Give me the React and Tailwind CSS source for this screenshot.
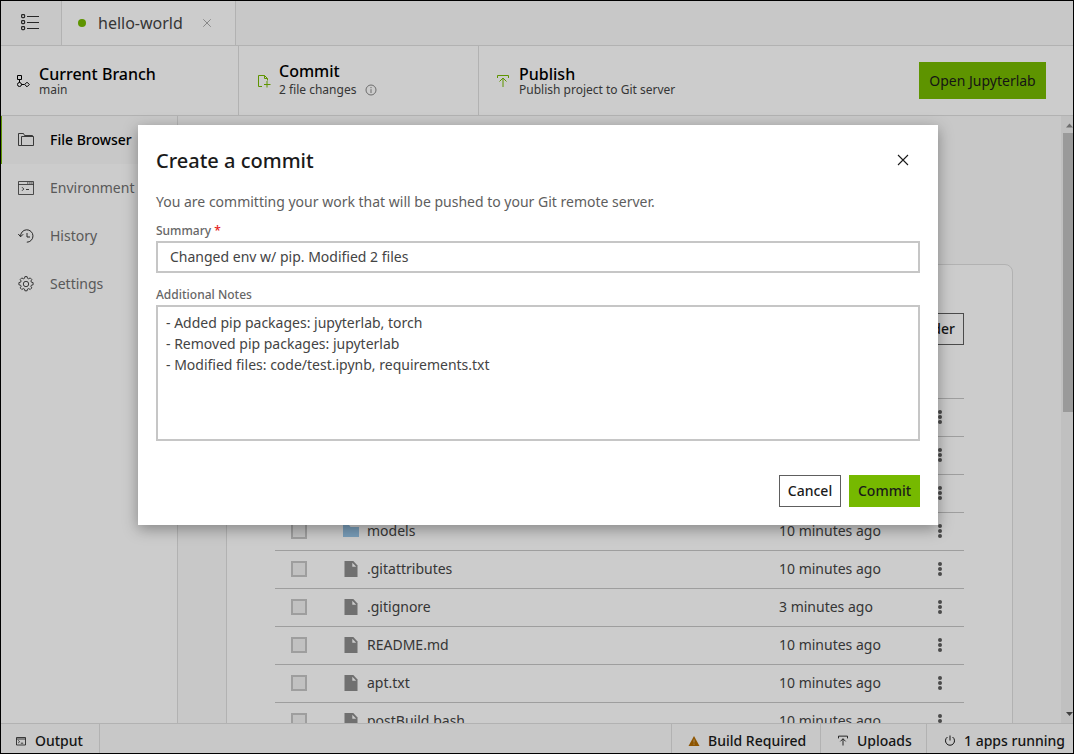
import { useState } from "react";

const files = [
  { name: "code", kind: "folder", time: "10 minutes ago" },
  { name: "data", kind: "folder", time: "10 minutes ago" },
  { name: "docs", kind: "folder", time: "10 minutes ago" },
  { name: "models", kind: "folder", time: "10 minutes ago" },
  { name: ".gitattributes", kind: "file", time: "10 minutes ago" },
  { name: ".gitignore", kind: "file", time: "3 minutes ago" },
  { name: "README.md", kind: "file", time: "10 minutes ago" },
  { name: "apt.txt", kind: "file", time: "10 minutes ago" },
  { name: "postBuild.bash", kind: "file", time: "10 minutes ago" },
];

function Icon({ size = 16, className = "", children }) {
  return (
    <svg
      width={size}
      height={size}
      viewBox={`0 0 ${size} ${size}`}
      fill="none"
      stroke="currentColor"
      className={`shrink-0 ${className}`}
      aria-hidden="true"
    >
      {children}
    </svg>
  );
}

const ListIcon = () => (
  <Icon size={20}>
    <rect x="1.6" y="1.6" width="3" height="3" rx="0.8" strokeWidth="1.2" />
    <rect x="1.6" y="7.6" width="3" height="3" rx="0.8" strokeWidth="1.2" />
    <rect x="1.6" y="13.6" width="3" height="3" rx="0.8" strokeWidth="1.2" />
    <path d="M7 3.5h12M7 9.5h12M7 15.5h12" strokeWidth="1.2" />
  </Icon>
);

const BranchIcon = () => (
  <Icon>
    <path d="M2.5 2.5h4v4h-4zM4.5 6.5v3" />
    <circle cx="4.5" cy="11.5" r="2" />
    <path d="M6.5 11.5h3" />
    <path d="M12 9.2l2.3 2.3L12 13.8l-2.3-2.3z" />
  </Icon>
);

const CommitIcon = () => (
  <Icon>
    <path d="M7 13.5H3.5v-11h6l3 3v2M9.5 2.5v3h3M12 8v6.5M9 11.5h6.5" />
  </Icon>
);

const UploadIcon = () => (
  <Icon>
    <path d="M2.5 5V2.5h11V5M8 14V5.5M4.5 8.5L8 5l3.5 3.5" />
  </Icon>
);

const InfoIcon = () => (
  <Icon size={12}>
    <circle cx="6" cy="6" r="5" />
    <path d="M6 5.2V9M6 3v1.2" />
  </Icon>
);

const FoldersIcon = () => (
  <Icon>
    <path d="M3.5 13.5h-3v-12h5l1 2h8v1M3.5 4.5h12v9h-12z" strokeWidth="0.9" />
  </Icon>
);

const WindowIcon = () => (
  <Icon>
    <path d="M.5 1.5h15v13H.5zM.5 4.5h15" strokeWidth="0.8" />
    <path d="M4 7.2l1.8 1.8L4 10.8M8 9.5h3" strokeWidth="0.9" />
    <path d="M9 3h1.4M11.2 3h1.4M13.2 3h1.4" strokeWidth="1" />
  </Icon>
);

const TerminalIcon = () => (
  <Icon size={10}>
    <path d="M.5 1.5h9v7.5h-9zM.5 3h9M2.2 4.4l1.4 1.3-1.4 1.3M4.8 7.2h2.4" strokeWidth="0.8" />
  </Icon>
);

const HistoryIcon = () => (
  <Icon>
    <path d="M2.6 8.5A6.2 6.2 0 1 1 8.8 14.2M.3 6l2.3 2.8L5.2 6.2M9 5v4h3" />
  </Icon>
);

const GearIcon = () => (
  <Icon>
    <circle cx="8" cy="8" r="2.7" strokeWidth="0.9" />
    <path
      strokeWidth="0.9"
      strokeLinejoin="round"
      d="M6.9.6h2.2l.4 1.7 1.2.5 1.5-.9 1.6 1.6-.9 1.5.5 1.2 1.7.4v2.2l-1.7.4-.5 1.2.9 1.5-1.6 1.6-1.5-.9-1.2.5-.4 1.7H6.9l-.4-1.7-1.2-.5-1.5.9-1.6-1.6.9-1.5-.5-1.2L.9 8.8V6.6l1.7-.4.5-1.2-.9-1.5 1.6-1.6 1.5.9 1.2-.5z"
    />
  </Icon>
);

const FolderGlyph = () => (
  <svg width="16" height="16" viewBox="0 0 16 16" className="shrink-0" aria-hidden="true">
    <path d="M0 2h6l1.5 2H16v10H0z" fill="#98c5e8" />
  </svg>
);

const FileGlyph = () => (
  <svg width="16" height="16" viewBox="0 0 16 16" className="shrink-0" aria-hidden="true">
    <path d="M1.5 0h8.8l4.2 4.5V16h-13z" fill="#8c8c8c" />
    <path d="M9.3 1.8v3.9h3.9z" fill="#fff" />
  </svg>
);

const Kebab = () => (
  <svg width="16" height="16" viewBox="0 0 16 16" fill="#5e5e5e" aria-hidden="true">
    <circle cx="8" cy="3" r="2" />
    <circle cx="8" cy="8" r="2" />
    <circle cx="8" cy="13" r="2" />
  </svg>
);

const CloseIcon = ({ size = 16 }) => (
  <svg width={size} height={size} viewBox="0 0 16 16" stroke="currentColor" fill="none" aria-hidden="true">
    <path d="M3 3l10 10M13 3L3 13" strokeWidth="1.1" />
  </svg>
);

const nav = [
  { label: "File Browser", icon: <FoldersIcon />, active: true },
  { label: "Environment", icon: <WindowIcon /> },
  { label: "History", icon: <HistoryIcon /> },
  { label: "Settings", icon: <GearIcon /> },
];

function TopTabs() {
  return (
    <div className="flex h-[45px] shrink-0 border-b border-[#dfdfdf] bg-[#fafafa]">
      <button className="flex w-[61px] items-center justify-center border-r border-[#dfdfdf] pr-0.5 text-[#333]" aria-label="Projects">
        <ListIcon />
      </button>
      <div className="flex w-[174px] items-center border-r border-[#dfdfdf] bg-white pl-4">
        <span className="size-2 rounded-full bg-[#76b900]" />
        <a href="#project" className="ml-3 text-base leading-5 text-[#444]">hello-world</a>
        <button className="ml-[18px] text-[#999]" aria-label="Close tab">
          <CloseIcon size={12} />
        </button>
      </div>
    </div>
  );
}

function Action({ icon, title, children, className = "" }) {
  return (
    <div className={`flex items-center ${className}`}>
      {icon}
      <div className="ml-2">
        <div className="text-base leading-[18px] font-medium text-black">{title}</div>
        {children}
      </div>
    </div>
  );
}

function GitBar() {
  return (
    <div className="flex h-[70px] shrink-0 border-b border-[#dfdfdf] bg-white">
      <Action
        title="Current Branch"
        className="w-[238px] border-r border-[#dfdfdf] pl-3.5"
        icon={<BranchIcon />}
      >
        <div className="text-xs leading-[14px] text-[#444]">main</div>
      </Action>
      <Action
        title="Commit"
        className="w-60 border-r border-[#dfdfdf] pl-4"
        icon={<span className="text-[#76b900]"><CommitIcon /></span>}
      >
        <div className="flex items-center gap-[9px] text-xs leading-5 text-[#444]">
          2 file changes
          <span className="text-[#888]"><InfoIcon /></span>
        </div>
      </Action>
      <Action
        title="Publish"
        className="flex-1 pl-4"
        icon={<span className="text-[#76b900]"><UploadIcon /></span>}
      >
        <div className="text-xs leading-[14px] text-[#444]">Publish project to Git server</div>
      </Action>
      <div className="flex items-center pr-[27px]">
        <button className="h-[37px] w-[127px] bg-[#76b900] text-sm text-[#1a1a1a]">Open Jupyterlab</button>
      </div>
    </div>
  );
}

function Sidebar() {
  return (
    <nav className="w-[177px] shrink-0 border-r border-[#dfdfdf] bg-white">
      {nav.map((n) => (
        <a
          key={n.label}
          href="#section"
          className={`flex h-12 items-center gap-4 pl-[17px] text-sm ${
            n.active
              ? "bg-[#fafafa] font-medium text-black shadow-[inset_1px_0_0_#76b900]"
              : "text-[#707070]"
          }`}
        >
          <span className="text-[#333]">{n.icon}</span>
          {n.label}
        </a>
      ))}
    </nav>
  );
}

function FileTable() {
  return (
    <table className="w-full table-fixed text-sm text-[#444]">
      <thead>
        <tr className="h-[37px] border-b border-[#c6c6c6] text-left">
          <th className="w-[68px]" />
          <th className="font-medium">Name</th>
          <th className="w-[145px] font-medium">Modified</th>
          <th className="w-10" />
        </tr>
      </thead>
      <tbody>
        {files.map((f) => (
          <tr key={f.name} className="h-[38px] border-b border-[#c6c6c6]">
            <td className="pl-4">
              <input
                type="checkbox"
                aria-label={`Select ${f.name}`}
                className="block size-4 appearance-none border-2 border-[#c6c6c6] bg-[#f2f2f2]"
              />
            </td>
            <td>
              <span className="flex items-center gap-2">
                {f.kind === "folder" ? <FolderGlyph /> : <FileGlyph />}
                {f.name}
              </span>
            </td>
            <td>{f.time}</td>
            <td className="pl-2">
              <button className="block" aria-label={`Actions for ${f.name}`}>
                <Kebab />
              </button>
            </td>
          </tr>
        ))}
      </tbody>
    </table>
  );
}

function ScrollBar() {
  return (
    <div className="flex w-3 shrink-0 flex-col justify-between bg-[#f0f0f0] pl-0.5" aria-hidden="true">
      <div>
        <svg width="10" height="17" viewBox="0 0 10 17" className="block">
          <path d="M3 11.5L6.5 7.5l3.5 4z" fill="#8a8a8a" />
        </svg>
        <div className="h-[279px] bg-[#c1c1c1]" />
      </div>
      <svg width="10" height="16" viewBox="0 0 10 16">
        <path d="M3 5h7L6.5 9z" fill="#505050" />
      </svg>
    </div>
  );
}

function StatusBar() {
  const item = "flex items-center gap-2 border-l border-[#dfdfdf] pt-[5px]";
  return (
    <footer className="flex h-[30px] shrink-0 justify-between border-t border-[#dfdfdf] bg-[#fafafa] text-sm font-medium text-[#1a1a1a]">
      <button className="flex w-[99px] items-center gap-[9px] border-r border-[#dfdfdf] pt-[5px] pl-[15px]">
        <TerminalIcon />
        Output
      </button>
      <div className="flex">
        <button className={`${item} w-[149px] pl-4`}>
          <svg width="12" height="12" viewBox="0 0 12 12" aria-hidden="true">
            <path d="M6 1l5.5 10H.5z" fill="#b26b00" />
            <path d="M6 4.5v3M6 8.5v1.2" stroke="#fff" strokeOpacity=".5" />
          </svg>
          Build Required
        </button>
        <button className={`${item} w-[106px] pl-4`}>
          <svg width="12" height="12" viewBox="0 0 16 16" fill="none" stroke="currentColor" strokeWidth="1.2" aria-hidden="true">
            <path d="M2 4.5v-3h12v3M8 14V5M4.5 8.5L8 5l3.5 3.5" />
          </svg>
          Uploads
        </button>
        <button className={`${item} w-[147px] pl-[17px]`}>
          <svg width="12" height="12" viewBox="0 0 12 12" fill="none" stroke="currentColor" aria-hidden="true">
            <path d="M6 .5v5M3.5 2a4.5 4.5 0 1 0 5 0" />
          </svg>
          1 apps running
        </button>
      </div>
    </footer>
  );
}

function CommitDialog() {
  const [summary, setSummary] = useState("Changed env w/ pip. Modified 2 files");
  const [notes, setNotes] = useState(
    "- Added pip packages: jupyterlab, torch\n- Removed pip packages: jupyterlab\n- Modified files: code/test.ipynb, requirements.txt"
  );
  return (
    <div className="absolute inset-0 flex items-start justify-center bg-black/20 pt-[124px] pl-0.5">
      <form
        role="dialog"
        aria-labelledby="dialog-title"
        onSubmit={(e) => e.preventDefault()}
        className="flex w-full max-w-[800px] flex-col bg-white p-[18px] shadow-[0_4px_14px_rgba(0,0,0,0.35)]"
      >
        <div className="flex h-9 items-start justify-between">
          <h2 id="dialog-title" className="text-xl leading-9 font-medium text-[#1a1a1a]">Create a commit</h2>
          <button type="button" className="mr-[9px] flex h-[34px] items-center text-[#1a1a1a]" aria-label="Close">
            <CloseIcon />
          </button>
        </div>
        <p className="mt-3 text-sm leading-[22px] text-[#5e5e5e]">
          You are committing your work that will be pushed to your Git remote server.
        </p>
        <label htmlFor="summary" className="mt-2.5 text-xs leading-4 font-medium text-[#666]">
          Summary <span className="text-[#e52020]">*</span>
        </label>
        <input
          id="summary"
          value={summary}
          onChange={(e) => setSummary(e.target.value)}
          className="mt-0.5 h-8 w-full border-2 border-[#c6c6c6] bg-white px-3 pb-0.5 text-sm text-[#444] outline-none"
        />
        <label htmlFor="notes" className="mt-[14px] text-xs leading-4 font-medium text-[#666]">
          Additional Notes
        </label>
        <textarea
          id="notes"
          value={notes}
          onChange={(e) => setNotes(e.target.value)}
          className="mt-0.5 h-[136px] w-full resize-none border-2 border-[#c6c6c6] bg-white px-2 py-[5px] text-sm leading-[21px] text-[#444] outline-none"
        />
        <div className="mt-[34px] flex justify-end gap-2 text-sm font-medium text-[#1a1a1a]">
          <button type="button" className="h-8 w-[62px] border border-[#5e5e5e] bg-white">Cancel</button>
          <button type="submit" className="h-8 w-[71px] bg-[#76b900]">Commit</button>
        </div>
      </form>
    </div>
  );
}

export default function App() {
  return (
    <div className="relative flex h-screen flex-col overflow-hidden border border-black font-['Noto_Sans',sans-serif]">
      <TopTabs />
      <GitBar />
      <div className="flex min-h-0 flex-1">
        <Sidebar />
        <main className="flex-1 overflow-hidden bg-[#fafafa] px-12 pt-12">
          <h1 className="h-[100px] text-xl font-medium">File Browser</h1>
          <section className="rounded-lg border border-[#dfdfdf] bg-white px-12 pt-12 pb-12">
            <div className="flex justify-end pb-4">
              <button className="h-8 border border-[#5e5e5e] px-2 text-sm font-medium text-[#1a1a1a]">Add Folder</button>
            </div>
            <FileTable />
          </section>
        </main>
        <ScrollBar />
      </div>
      <StatusBar />
      <CommitDialog />
    </div>
  );
}
